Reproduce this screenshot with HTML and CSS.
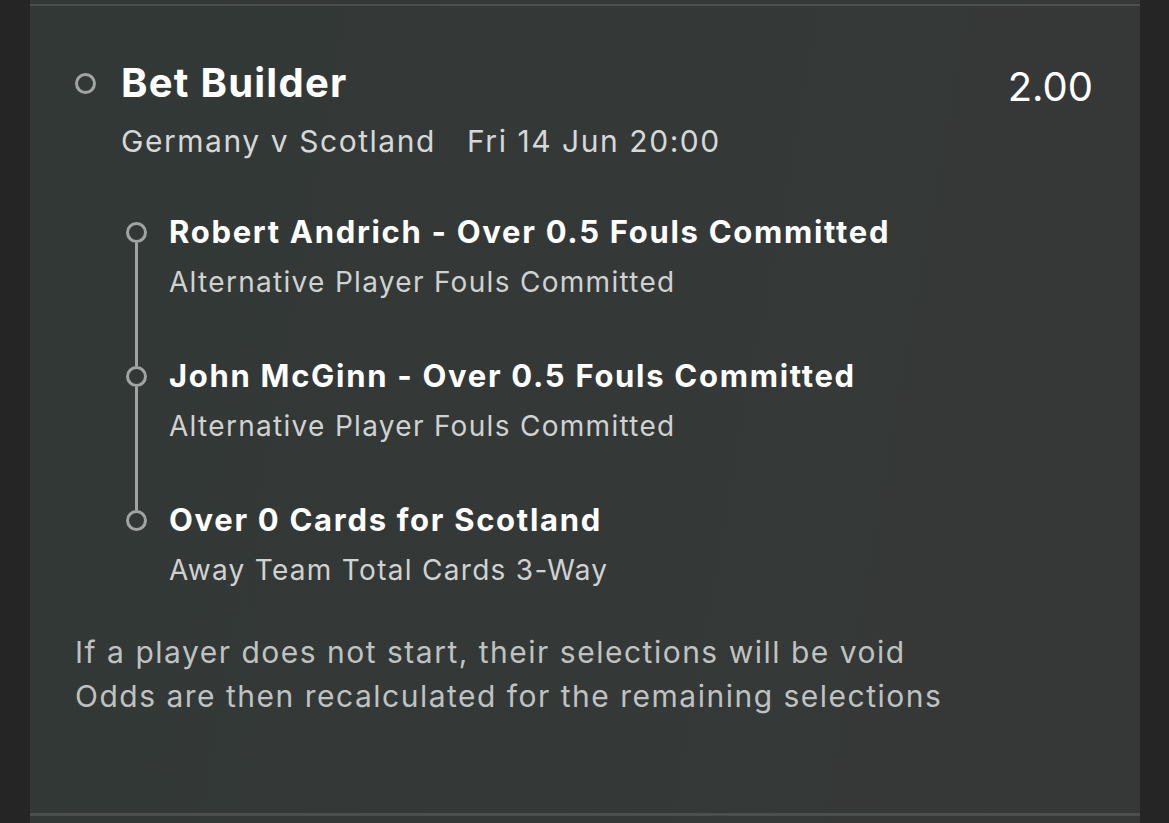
FILE: index.html
```html
<!DOCTYPE html>
<html lang="en">
<head>
<meta charset="utf-8">
<title>Bet Builder</title>
<link rel="stylesheet" href="styles.css">
</head>
<body>
<div class="page">
  <div class="gutter"></div>
  <main class="panel">
    <div class="rule rule-top"></div>
    <section class="bet">
      <header class="bet-head">
        <span class="ring ring-head"></span>
        <div class="bet-info">
          <h1 class="bet-title">Bet Builder</h1>
          <p class="bet-event"><span>Germany v Scotland</span><span class="bet-time">Fri 14 Jun 20:00</span></p>
        </div>
        <div class="bet-odds">2.00</div>
      </header>
      <ol class="legs">
        <li class="leg">
          <div class="leg-marker"><span class="ring"></span><span class="leg-line"></span></div>
          <div class="leg-body">
            <div class="leg-title">Robert Andrich - Over 0.5 Fouls Committed</div>
            <div class="leg-market">Alternative Player Fouls Committed</div>
          </div>
        </li>
        <li class="leg">
          <div class="leg-marker"><span class="ring"></span><span class="leg-line"></span></div>
          <div class="leg-body">
            <div class="leg-title">John McGinn - Over 0.5 Fouls Committed</div>
            <div class="leg-market">Alternative Player Fouls Committed</div>
          </div>
        </li>
        <li class="leg leg-last">
          <div class="leg-marker"><span class="ring"></span></div>
          <div class="leg-body">
            <div class="leg-title">Over 0 Cards for Scotland</div>
            <div class="leg-market">Away Team Total Cards 3-Way</div>
          </div>
        </li>
      </ol>
      <p class="note">If a player does not start, their selections will be void<br>Odds are then recalculated for the remaining selections</p>
    </section>
    <div class="rule rule-bottom"></div>
  </main>
  <div class="gutter"></div>
</div>
</body>
</html>
```
FILE: styles.css
```css
* { box-sizing: border-box; }
html, body { margin: 0; padding: 0; }
body {
  background: #252525;
  font-family: Inter, "Noto Sans", "Liberation Sans", sans-serif;
  color: #fff;
}
.page {
  display: flex;
  height: 823px;
  overflow: hidden;
}
.gutter {
  width: 30px;
  flex: none;
  background: #252525;
}
.gutter:last-child { width: 29px; }
.panel {
  flex: 1;
  display: flex;
  flex-direction: column;
  background: linear-gradient(100deg, #323836 0%, #343938 50%, #363837 100%);
  padding-top: 4px;
}
.rule {
  height: 2px;
  background: #4b504f;
  flex: none;
}
.bet {
  flex: 1;
  padding: 54px 47px 0 45px;
}
.bet-head {
  display: flex;
  align-items: flex-start;
}
.ring {
  display: block;
  width: 21px;
  height: 21px;
  border: 3px solid #a2a4a3;
  border-radius: 50%;
  flex: none;
}
.ring-head {
  margin-top: 13px;
  margin-right: 25px;
}
.bet-info { flex: 1; }
.bet-title {
  margin: 0;
  font-size: 40px;
  line-height: 45px;
  font-weight: 700;
  letter-spacing: 1.25px;
  color: #fff;
}
.bet-event {
  margin: 18px 0 0;
  font-size: 30px;
  line-height: 36px;
  letter-spacing: 1.55px;
  color: #d6d8d7;
  display: flex;
  gap: 31px;
}
.bet-odds {
  font-size: 40px;
  line-height: 46px;
  font-weight: 400;
  margin-top: 4px;
  color: #fff;
}
.legs {
  list-style: none;
  margin: 55px 0 0;
  padding: 0 0 0 51px;
}
.leg {
  display: flex;
  height: 144px;
}
.leg-last { height: auto; }
.leg-marker {
  width: 21px;
  flex: none;
  display: flex;
  flex-direction: column;
  align-items: center;
  padding-top: 8px;
  margin-right: 22px;
}
.leg-line {
  flex: 1;
  width: 2.5px;
  background: #a2a4a3;
  margin-bottom: -8px;
}
.leg-body { flex: 1; }
.leg-title {
  font-size: 31px;
  line-height: 36px;
  font-weight: 700;
  letter-spacing: 1.7px;
  color: #fff;
}
.leg-market {
  margin-top: 14px;
  font-size: 28px;
  line-height: 36px;
  letter-spacing: 1.3px;
  color: #d0d2d1;
}
.note {
  margin: 42px 0 0;
  font-size: 30px;
  line-height: 44px;
  letter-spacing: 1.5px;
  color: #bfc2c1;
}
.rule-bottom {
  margin-bottom: 7px;
  height: 3px;
}
```
